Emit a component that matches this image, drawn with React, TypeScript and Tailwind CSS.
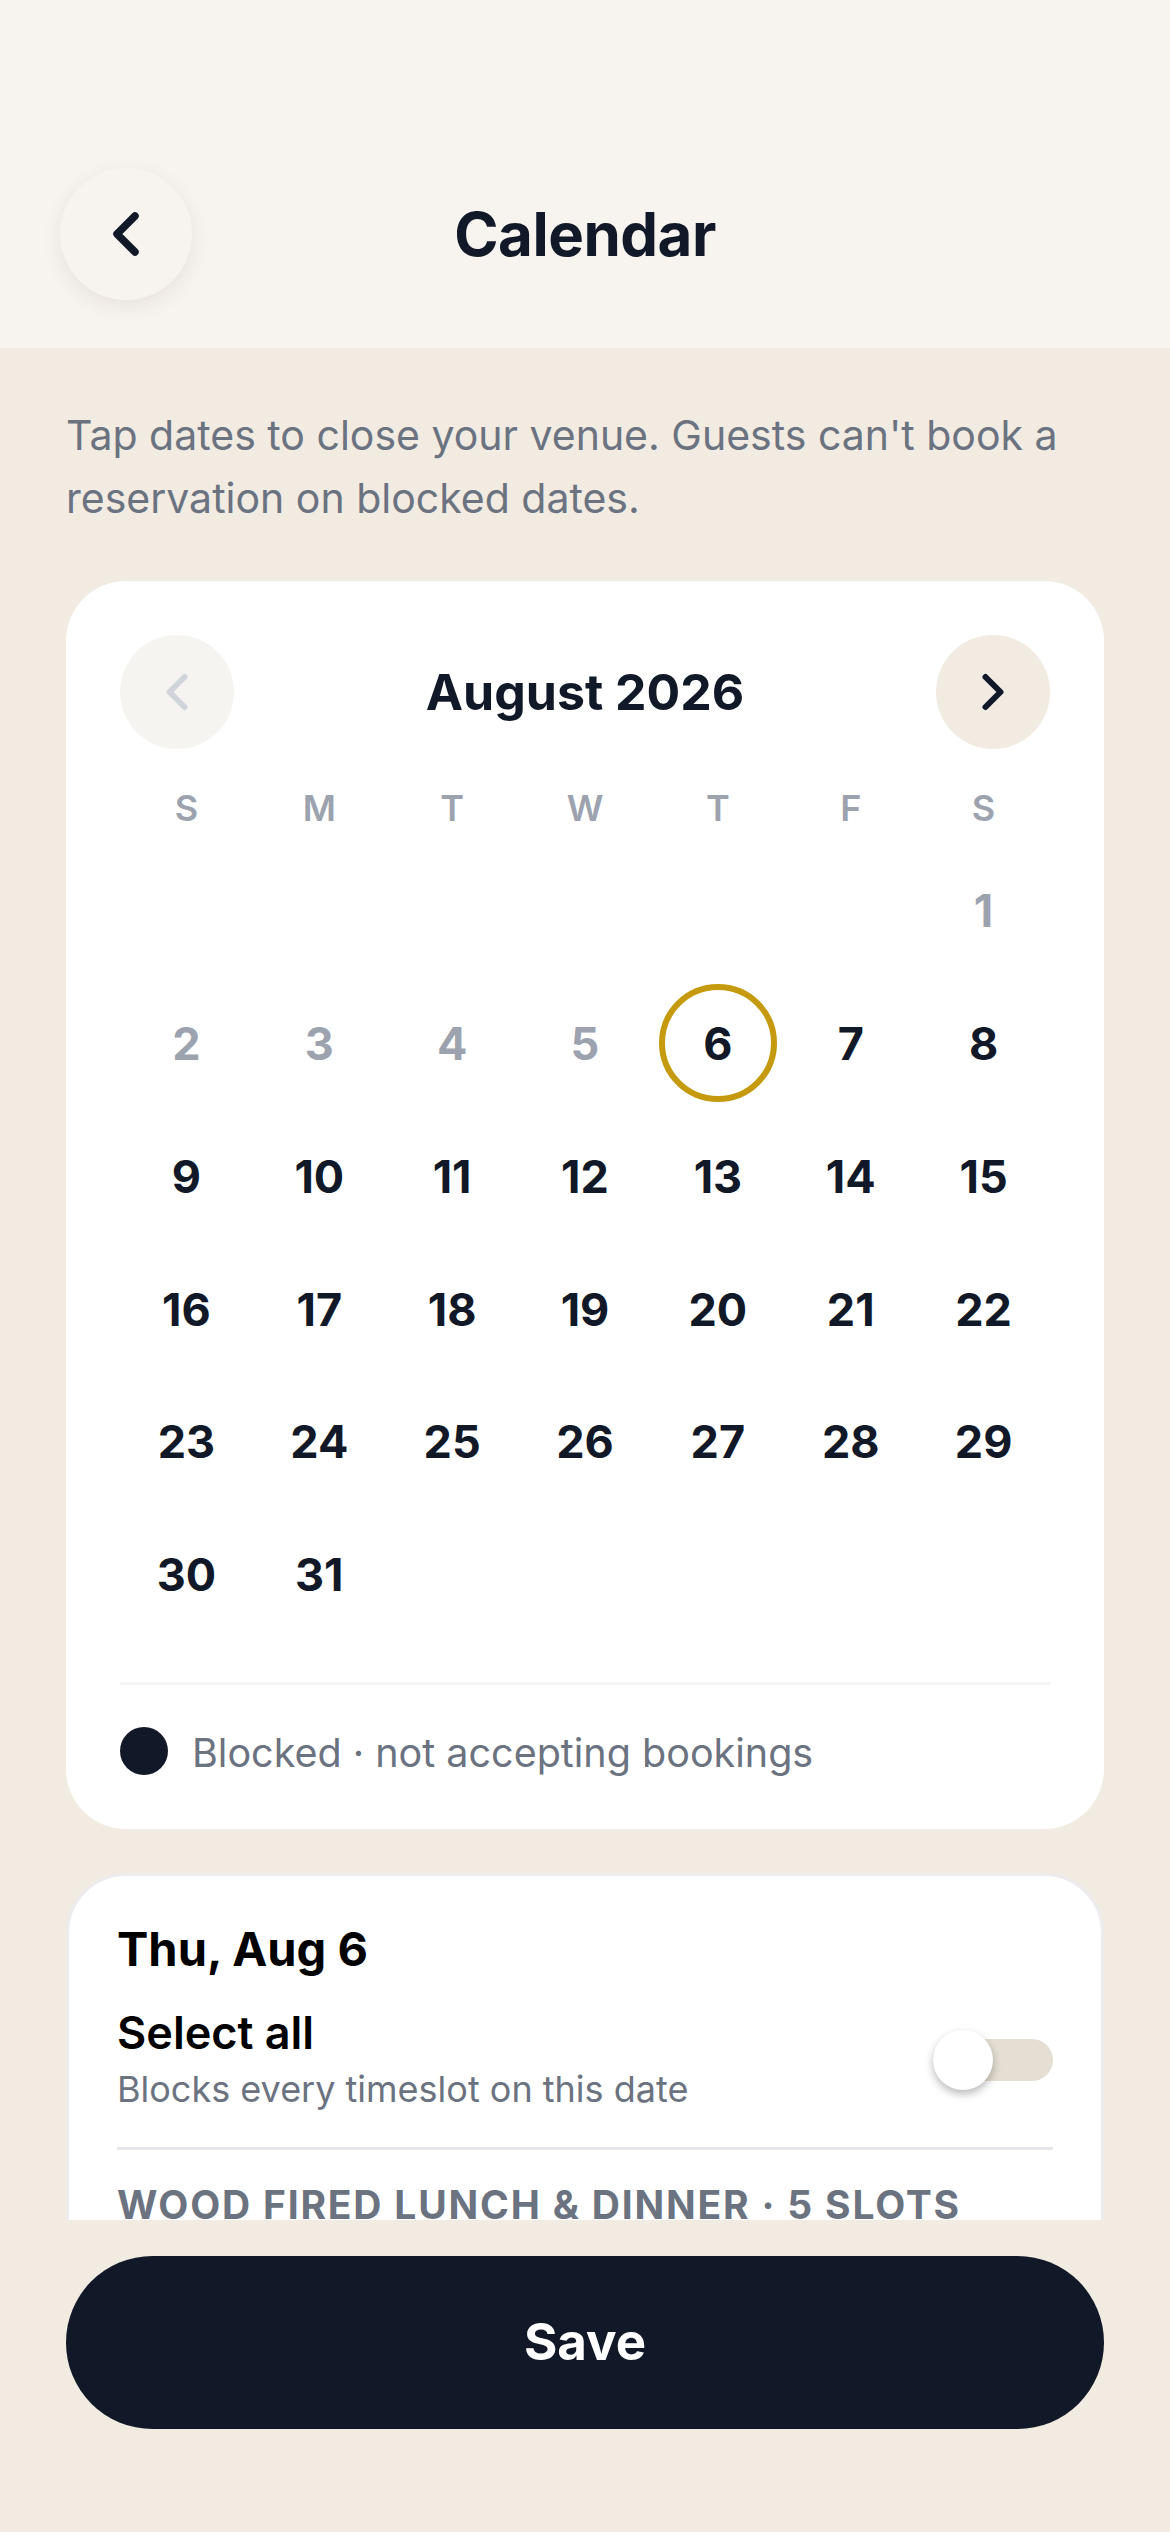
import React from "react";

const WEEK = ["S", "M", "T", "W", "T", "F", "S"];

function Chevron({ dir, size, stroke, color }: { dir: "left" | "right"; size: number; stroke: number; color: string }) {
  return (
    <svg width={size} height={size} viewBox="0 0 24 24" fill="none" stroke={color} strokeWidth={stroke} strokeLinecap="round" strokeLinejoin="round">
      {dir === "left" ? <path d="m15 18-6-6 6-6" /> : <path d="m9 18 6-6-6-6" />}
    </svg>
  );
}

export default function App() {
  const cells: (number | null)[] = [];
  for (let i = 0; i < 6; i++) cells.push(null);
  for (let d = 1; d <= 31; d++) cells.push(d);

  return (
    <div
      className="w-[1170px] h-[2532px] flex flex-col bg-[#F1EBE2] overflow-hidden text-[#111827]"
      style={{ fontFamily: "Inter, 'Noto Sans', sans-serif" }}
    >
      {/* Header */}
      <div className="h-[348px] shrink-0 bg-[#F7F3EE] px-[60px] pt-[168px]">
        <div className="grid grid-cols-[132px_1fr_132px] items-center h-[132px]">
          <button className="w-[132px] h-[132px] rounded-full bg-[#F7F3EE] shadow-[0_6px_20px_rgba(60,40,20,0.08)] flex items-center justify-center">
            <Chevron dir="left" size={72} stroke={2.5} color="#111827" />
          </button>
          <div className="text-center text-[60px] font-bold leading-none tracking-[-0.5px]">Calendar</div>
          <div />
        </div>
      </div>

      {/* Scroll content */}
      <div className="flex-1 min-h-0 overflow-hidden px-[66px] pt-[56px]">
        <p className="text-[41px] leading-[63px] text-[#6B7280]">
          Tap dates to close your venue. Guests can't book a reservation on blocked dates.
        </p>

        {/* Calendar card */}
        <div className="mt-[51px] bg-white rounded-[60px] p-[54px]">
          <div className="flex items-center justify-between h-[114px]">
            <button className="w-[114px] h-[114px] rounded-full bg-[#F5F4F1] flex items-center justify-center">
              <Chevron dir="left" size={60} stroke={2.4} color="#D1D5DB" />
            </button>
            <div className="text-[50px] font-bold leading-none">August 2026</div>
            <button className="w-[114px] h-[114px] rounded-full bg-[#F1EBE2] flex items-center justify-center">
              <Chevron dir="right" size={60} stroke={2.4} color="#111827" />
            </button>
          </div>

          <div className="mt-[35px] grid grid-cols-7 h-[48px] items-center">
            {WEEK.map((w, i) => (
              <div key={i} className="text-center text-[36px] font-semibold text-[#9CA3AF] leading-none">
                {w}
              </div>
            ))}
          </div>

          <div className="mt-[12px] grid grid-cols-7">
            {cells.map((d, i) => (
              <div key={i} className="aspect-square flex items-center justify-center">
                {d !== null && (
                  d === 6 ? (
                    <div className="w-[118px] h-[118px] rounded-full border-[6px] border-[#C59A0E] flex items-center justify-center text-[45px] font-bold text-[#111827]">
                      6
                    </div>
                  ) : (
                    <span className={`text-[45px] font-bold leading-none ${d < 6 ? "text-[#9CA3AF]" : "text-[#111827]"}`}>
                      {d}
                    </span>
                  )
                )}
              </div>
            ))}
          </div>

          <div className="mt-[41px] h-[3px] bg-[#F3F4F6]" />

          <div className="pt-[42px] flex items-center gap-[24px] h-[90px]">
            <div className="w-[48px] h-[48px] rounded-full bg-[#111827]" />
            <span className="text-[39.5px] text-[#6B7280] leading-[44px] pt-[4px]">Blocked · not accepting bookings</span>
          </div>
        </div>

        {/* Date card */}
        <div className="mt-[44px] bg-white rounded-[60px] border-[3px] border-[#ECECEF] px-[48px] pt-[43px] pb-[48px]">
          <div className="text-[47px] leading-[60px] font-bold text-black">Thu, Aug 6</div>
          <div className="mt-[26px] flex items-center justify-between">
            <div>
              <div className="text-[45px] leading-[56px] font-semibold text-black">Select all</div>
              <div className="text-[36px] leading-[51px] pt-[3px] text-[#6B7280]">Blocks every timeslot on this date</div>
            </div>
            <div className="relative w-[120px] h-[60px]">
              <div className="absolute left-0 right-0 top-[9px] h-[42px] rounded-full bg-[#E5DED3]" />
              <div className="absolute left-0 top-0 w-[60px] h-[60px] rounded-full bg-white shadow-[0_4px_9px_rgba(0,0,0,0.28)]" />
            </div>
          </div>
          <div className="mt-[32px] h-[3px] bg-[#E5E7EB]" />
          <div className="mt-[29px] text-[39px] leading-[51px] font-bold tracking-[1.8px] text-[#6B7280] uppercase">
            Wood Fired Lunch &amp; Dinner · 5 slots
          </div>
          <div className="mt-[40px] h-[300px]" />
        </div>
      </div>

      {/* Footer */}
      <div className="shrink-0 px-[66px] pt-[36px] pb-[103px]">
        <button className="w-full h-[173px] rounded-full bg-[#111827] text-white text-[51px] font-bold">
          Save
        </button>
      </div>
    </div>
  );
}
